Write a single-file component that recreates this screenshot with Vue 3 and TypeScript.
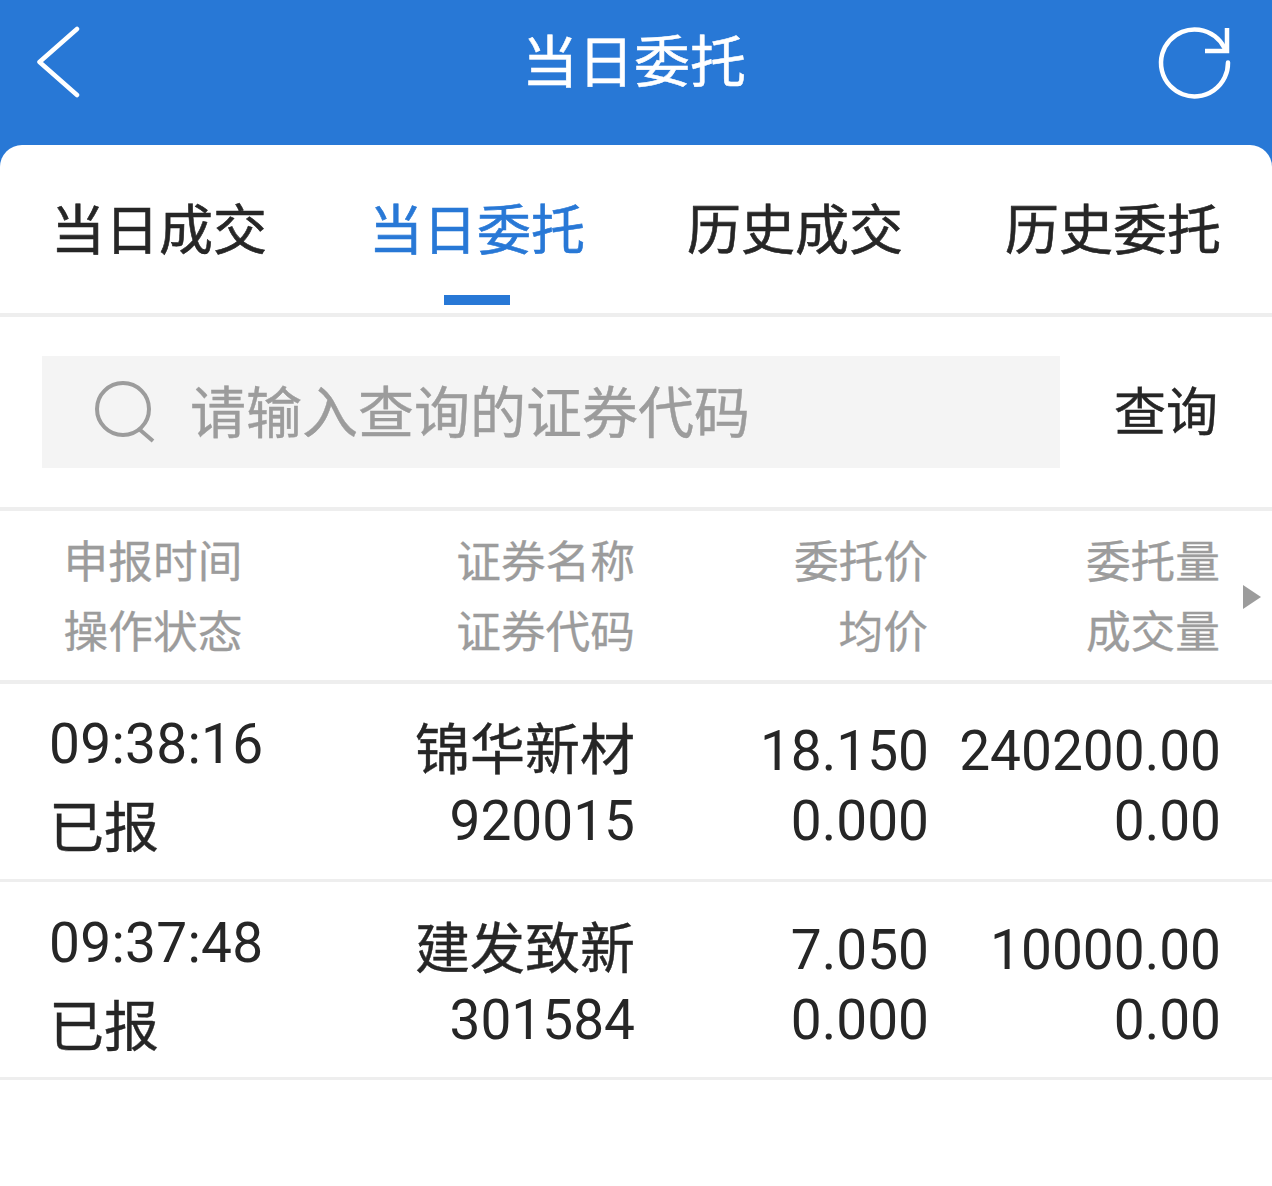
<script setup lang="ts">
const tabs = ['当日成交', '当日委托', '历史成交', '历史委托']
const rows = [
  { time: '09:38:16', status: '已报', name: '锦华新材', code: '920015', price: '18.150', avg: '0.000', qty: '240200.00', done: '0.00' },
  { time: '09:37:48', status: '已报', name: '建发致新', code: '301584', price: '7.050', avg: '0.000', qty: '10000.00', done: '0.00' },
]
</script>

<template>
  <div class="page">
    <header class="top">
      <svg class="back" width="44" height="72" viewBox="0 0 44 72">
        <path d="M41 3 L3.500 36 L41 69" fill="none" stroke="#fff" stroke-width="4.500" stroke-linecap="round" stroke-linejoin="round" />
      </svg>
      <h1 class="title">当日委托</h1>
      <svg class="reload" width="76" height="76" viewBox="0 0 76 76">
        <path d="M72 38.500 A33.500 33.500 0 1 1 68.500 24" fill="none" stroke="#fff" stroke-width="4.500" stroke-linecap="round" />
        <path d="M71 4 V27 H49" fill="none" stroke="#fff" stroke-width="4.500" />
      </svg>
    </header>
    <main class="card">
      <nav class="tabs">
        <div v-for="(t, i) in tabs" :key="t" class="tab" :class="{ on: i === 1 }">{{ t }}</div>
      </nav>
      <section class="search">
        <div class="box">
          <svg width="62" height="62" viewBox="0 0 62 62">
            <circle cx="29" cy="28" r="26" fill="none" stroke="#9c9c9c" stroke-width="4" />
            <path d="M45 48 L59 60" fill="none" stroke="#9c9c9c" stroke-width="4" />
          </svg>
          <span class="ph">请输入查询的证券代码</span>
        </div>
        <span class="go">查询</span>
      </section>
      <section class="row head">
        <div class="c1"><div>申报时间</div><div>操作状态</div></div>
        <div class="c2"><div>证券名称</div><div>证券代码</div></div>
        <div class="c3"><div>委托价</div><div>均价</div></div>
        <div class="c4"><div>委托量</div><div>成交量</div></div>
        <i class="tri"></i>
      </section>
      <section v-for="r in rows" :key="r.code" class="row data">
        <div class="c1 left"><div class="time">{{ r.time }}</div><div class="status">{{ r.status }}</div></div>
        <div class="c2"><div class="name">{{ r.name }}</div><div>{{ r.code }}</div></div>
        <div class="c3"><div>{{ r.price }}</div><div>{{ r.avg }}</div></div>
        <div class="c4"><div>{{ r.qty }}</div><div>{{ r.done }}</div></div>
      </section>
    </main>
  </div>
</template>

<style>
html, body { margin: 0; background: #fff; }
</style>

<style scoped>
.page {
  width: 1272px;
  height: 1186px;
  background: #2878d6;
  font-family: Roboto, "Noto Sans CJK SC", sans-serif;
  color: #262626;
  display: flex;
  flex-direction: column;
  overflow: hidden;
}
.top {
  height: 145px;
  flex: none;
  display: grid;
  grid-template-columns: 1fr auto 1fr;
  align-items: center;
  padding: 0 40px 22px 36px;
  box-sizing: border-box;
}
.reload { justify-self: end; }
.title {
  margin: -8px 0 0;
  font-size: 56px;
  font-weight: 400;
  color: #fff;
  line-height: 70px;
  font-family: "Noto Sans CJK SC", sans-serif;
  -webkit-text-stroke: 0.5px #fff;
}
.back, .reload { display: block; }
.card {
  flex: 1;
  background: #fff;
  border-radius: 22px 22px 0 0;
}
.tabs {
  display: grid;
  grid-template-columns: repeat(4, 318px);
  height: 172px;
  border-bottom: 4px solid #eeeeee;
  box-sizing: border-box;
}
.tab {
  font-size: 54px;
  line-height: 70px;
  text-align: center;
  padding-top: 47px;
  position: relative;
  font-family: "Noto Sans CJK SC", sans-serif;
  -webkit-text-stroke: 0.6px currentColor;
}
.tab.on { color: #2878d6; }
.tab.on::after {
  content: "";
  position: absolute;
  left: 126px;
  top: 150px;
  width: 66px;
  height: 10px;
  background: #2878d6;
}
.search {
  height: 194px;
  box-sizing: border-box;
  border-bottom: 4px solid #eeeeee;
  display: flex;
  align-items: flex-start;
  padding: 39px 0 0 42px;
}
.box {
  width: 1018px;
  height: 112px;
  background: #f4f4f4;
  display: flex;
  align-items: center;
  padding-left: 52px;
  box-sizing: border-box;
  gap: 34px;
}
.box svg { flex: none; }
.ph {
  font-size: 56px;
  color: #9c9c9c;
  line-height: 70px;
  margin-top: -6px;
  font-family: "Noto Sans CJK SC", sans-serif;
  -webkit-text-stroke: 0.4px #9c9c9c;
  white-space: nowrap;
}
.go {
  margin-left: 54px;
  font-size: 52px;
  line-height: 106px;
  font-family: "Noto Sans CJK SC", sans-serif;
  -webkit-text-stroke: 0.4px currentColor;
}
.row {
  display: grid;
  grid-template-columns: 50px 210px 375px 293px 292px;
  border-bottom: 3px solid #eeeeee;
  position: relative;
  box-sizing: border-box;
  text-align: right;
}
.c1 { grid-column: 2; }
.c2 { grid-column: 3; }
.c3 { grid-column: 4; }
.c4 { grid-column: 5; }
.head {
  height: 173px;
  padding-top: 13px;
  color: #9c9c9c;
  font-size: 44.7px;
  line-height: 70px;
  border-bottom-width: 4px;
  font-family: "Noto Sans CJK SC", sans-serif;
  -webkit-text-stroke: 0.3px #9c9c9c;
}
.head .c1 { text-align: center; margin-left: -2px; margin-right: 2px; }
.tri {
  position: absolute;
  left: 1243px;
  top: 74px;
  width: 0;
  height: 0;
  border-left: 18px solid #9c9c9c;
  border-top: 12px solid transparent;
  border-bottom: 12px solid transparent;
}
.data {
  height: 198px;
  padding-top: 32px;
  font-size: 55px;
  line-height: 70px;
}
.data .c3, .data .c4 { transform: translateX(1px); }
.data + .data { padding-top: 33px; }
.name { -webkit-text-stroke: 0.4px currentColor; margin-top: -1px; margin-bottom: 1px; }
.left { text-align: left; margin-top: -7px; white-space: nowrap; }
.time { margin-left: -1px; letter-spacing: 0.3px; }
.status {
  margin-top: 9px;
  margin-left: -1px;
  font-family: "Noto Sans CJK SC", sans-serif;
  -webkit-text-stroke: 0.4px currentColor;
}
</style>
